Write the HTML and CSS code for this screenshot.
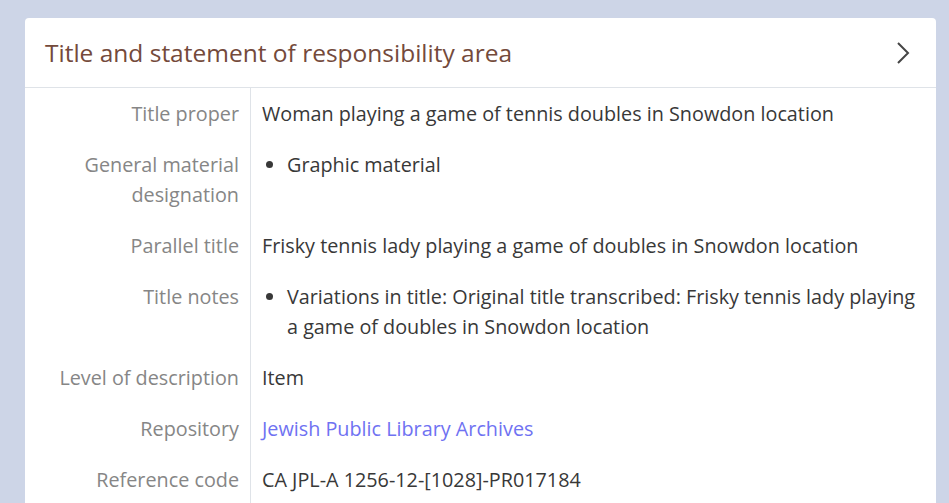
FILE: index.html
```html
<!DOCTYPE html>
<html lang="en">
<head>
<meta charset="utf-8">
<title>Title and statement of responsibility area</title>
<link rel="stylesheet" href="styles.css">
</head>
<body>
<section class="card">
  <header class="card-header">
    <h2 class="card-title">Title and statement of responsibility area</h2>
    <svg class="chevron" width="14" height="24" viewBox="0 0 14 24" aria-hidden="true"><polyline points="2,2 12,12 2,22" fill="none" stroke="#454545" stroke-width="2"/></svg>
  </header>
  <div class="fields">
    <div class="row"><div class="label">Title proper</div><div class="value">Woman playing a game of tennis doubles in Snowdon location</div></div>
    <div class="row"><div class="label">General material designation</div><div class="value"><ul class="list"><li>Graphic material</li></ul></div></div>
    <div class="row"><div class="label">Parallel title</div><div class="value">Frisky tennis lady playing a game of doubles in Snowdon location</div></div>
    <div class="row"><div class="label">Title notes</div><div class="value"><ul class="list"><li>Variations in title: Original title transcribed: Frisky tennis lady playing a game of doubles in Snowdon location</li></ul></div></div>
    <div class="row"><div class="label">Level of description</div><div class="value">Item</div></div>
    <div class="row"><div class="label">Repository</div><div class="value"><a class="link" href="#">Jewish Public Library Archives</a></div></div>
    <div class="row"><div class="label">Reference code</div><div class="value">CA JPL-A 1256-12-[1028]-PR017184</div></div>
  </div>
</section>
</body>
</html>
```
FILE: styles.css
```css
html, body {
  margin: 0;
  padding: 0;
  background: #cdd5e7;
  font-family: "Open Sans", "Noto Sans", sans-serif;
  height: 503px;
  overflow: hidden;
}
.card {
  margin: 18px 13px 0 25px;
  background: #fff;
  border-radius: 4px 4px 0 0;
}
.card-header {
  display: flex;
  align-items: center;
  justify-content: space-between;
  height: 70px;
  padding: 0 26px 0 20px;
  border-bottom: 1px solid #dfe3e8;
  box-sizing: border-box;
}
.card-title {
  margin: 0;
  font-weight: 400;
  font-size: 24.5px;
  color: #744a3b;
}
.chevron { display: block; }
.fields { display: flex; flex-direction: column; }
.row {
  display: grid;
  grid-template-columns: 226px 1fr;
  font-size: 19.8px;
  line-height: 30px;
}
.label {
  text-align: right;
  color: #868686;
  padding: 11px 11px 10px 10px;
  border-right: 1px solid #dfe3e8;
}
.value {
  color: #383838;
  padding: 11px 20px 10px 11px;
}
.list {
  margin: 0;
  padding-left: 25px;
}
.link {
  color: #6f72f2;
  text-decoration: none;
}
```
